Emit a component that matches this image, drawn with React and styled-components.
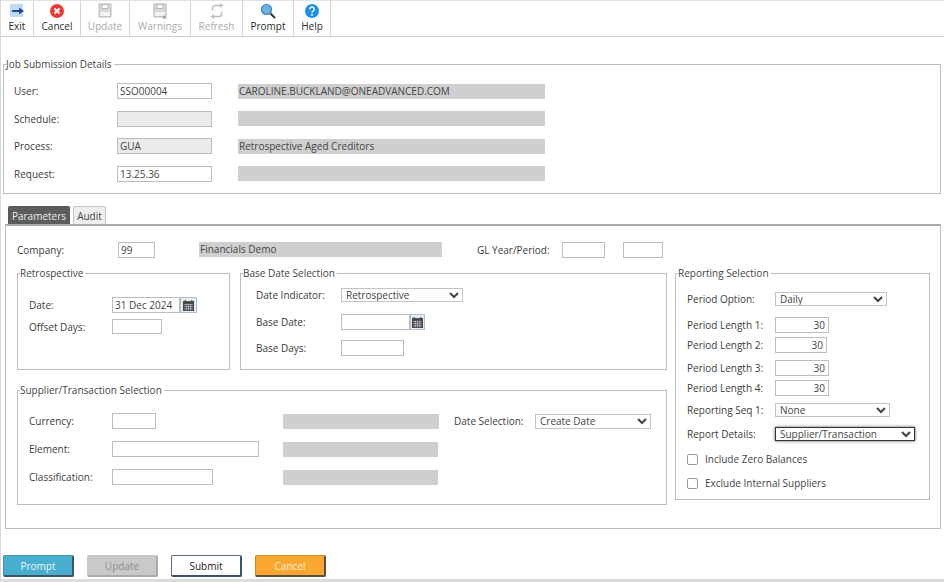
import React from 'react';
import styled, {createGlobalStyle} from 'styled-components';

const GlobalStyle = createGlobalStyle`
html, body {
    margin: 0;
    padding: 0;
    background: #fff;
    overflow: hidden;
}
* {
    box-sizing: border-box;
}
body, input, select, button {
    font-family: "Open Sans", "Noto Sans", sans-serif;
    font-size: 10px;
    color: #333;
}
`

const Page = styled.div`
width: 944px;
height: 582px;
display: flex;
flex-direction: column;
border-left: 1px solid #d8d8d8;
border-bottom: 3px solid #dcdcdc;
`
const Toolbar = styled.div`
display: flex;
height: 37px;
flex-shrink: 0;
border-top: 1px solid #e2e2e2;
border-bottom: 1px solid #ccc;
`
const ToolButton = styled.div`
width: ${({$width}) => $width}px;
display: flex;
flex-direction: column;
align-items: center;
justify-content: flex-start;
padding-top: 2px;
border-right: 1px solid #d4d4d4;
color: ${({$disabled}) => $disabled ? '#a9a9a9' : '#2b2b2b'};
line-height: 13px;
& > svg {
    width: 16px;
    height: 16px;
    margin-bottom: 1px;
}
`
const Content = styled.div`
display: flex;
flex-direction: column;
padding: 21px 3px 0 2px;
flex: 1;
`
const Group = styled.fieldset`
margin: 0;
padding: 0;
border: 1px solid #bdbdbd;
min-width: 0;
flex-shrink: 0;
width: ${({$width}) => $width ? `${$width}px` : 'auto'};
height: ${({$height}) => $height}px;
`
const Legend = styled.legend`
margin-left: 2px;
padding: 0 2px 0 0;
line-height: 13px;
color: #444;
`
const GroupBody = styled.div`
padding: ${({$top}) => $top}px 0 0 ${({$left}) => $left}px;
`
const JobGrid = styled.div`
display: grid;
grid-template-columns: 77px 95px 307px;
column-gap: 26px;
row-gap: 11.5px;
align-items: center;
`
const Label = styled.span`
color: #3c3c3c;
white-space: nowrap;
`
const TextInput = styled.input`
display: block;
height: ${({$height}) => $height || 16}px;
width: ${({$width}) => $width ? `${$width}px` : '100%'};
padding: 0 ${({$right}) => $right ? 3 : 2}px 0 2px;
border: 1px solid #bcbcbc;
border-radius: 0;
outline: none;
background: ${({$locked}) => $locked ? '#ebebeb' : '#fff'};
color: #444;
text-align: ${({$right}) => $right ? 'right' : 'left'};
`
const GreyField = styled.div`
height: 15px;
width: ${({$width}) => $width ? `${$width}px` : '100%'};
padding-left: 1px;
background: #cfcfcf;
color: #444;
line-height: 14px;
white-space: nowrap;
`
const Tabs = styled.div`
display: flex;
gap: 3px;
margin: 12px 0 0 5px;
height: 18px;
`
const Tab = styled.div`
width: ${({$width}) => $width}px;
display: flex;
align-items: center;
justify-content: center;
border: 1px solid ${({$active}) => $active ? '#555' : '#c4c4c4'};
border-bottom: none;
border-radius: 2px 2px 0 0;
background: ${({$active}) => $active ? '#5c5c5c' : '#eee'};
color: ${({$active}) => $active ? '#e6eef2' : '#444'};
`
const Panel = styled.div`
height: 305px;
margin-left: 2px;
padding: 15px 9px 0 11px;
border: 1px solid #bdbdbd;
border-top: 2px solid #aaa;
`
const CompanyRow = styled.div`
display: grid;
grid-template-columns: 101px 37px 44px 243px 35px 85px 43px 18px 40px;
align-items: center;
height: 17px;
`
const PanelBody = styled.div`
display: flex;
align-items: flex-start;
gap: 8px;
margin-top: 9px;
`
const LeftColumn = styled.div`
width: 650px;
flex-shrink: 0;
display: flex;
flex-direction: column;
gap: 14px;
`
const TopGroups = styled.div`
display: flex;
gap: 10px;
`
const FieldRow = styled.div`
display: grid;
grid-template-columns: ${({$label}) => $label}px 1fr;
align-items: center;
margin-top: ${({$gap}) => $gap || 0}px;
`
const DateBox = styled.div`
display: flex;
align-items: stretch;
`
const CalButton = styled.div`
width: ${({$width}) => $width}px;
height: 16px;
display: flex;
align-items: center;
justify-content: center;
background: #e9eef4;
border: 1px solid #a9bfd9;
& > svg {
    width: 11px;
    height: 11px;
}
`
const DropdownBox = styled.div`
height: ${({$height}) => $height || 14}px;
width: ${({$width}) => $width}px;
overflow: hidden;
display: flex;
align-items: center;
background: #fff;
border: 1px solid ${({$focused}) => $focused ? '#333' : '#c4c4c4'};
box-shadow: ${({$focused}) => $focused ? '0 0 3px rgba(0,0,0,.65)' : 'none'};
`
const DropdownSelect = styled.select`
display: block;
flex-shrink: 0;
width: 100%;
height: 18px;
padding: 0;
background: transparent;
border: none;
border-radius: 0;
outline: none;
color: #444;
`
const SupplierGrid = styled.div`
display: grid;
grid-template-columns: 83px 171px 171px 81px 116px;
row-gap: 12px;
align-items: center;
`
const CheckRow = styled.label`
display: flex;
align-items: center;
gap: 7px;
margin-top: ${({$gap}) => $gap}px;
height: 16px;
color: #444;
`
const CheckBox = styled.span`
width: 11px;
height: 11px;
border: 1px solid #9a9a9a;
border-radius: 2px;
background: #fff;
`
const Footer = styled.div`
display: flex;
gap: 13px;
margin-top: 26px;
`
const buttonColors = {
    prompt: {bg: '#48aed0', text: '#e8f6fb', edge: '#4a90ad', shade: '#3f5563'},
    update: {bg: '#c9c9c9', text: '#8f8f8f', edge: '#c9c9c9', shade: '#aaa'},
    submit: {bg: '#fff', text: '#222', edge: '#5c6b85', shade: '#3f4f6b'},
    cancel: {bg: '#fba62f', text: '#fff3df', edge: '#c98a2a', shade: '#5a5040'},
};
const ActionButton = styled.div`
width: 71px;
height: 22px;
display: flex;
align-items: center;
justify-content: center;
border: 1px solid ${({$variant}) => buttonColors[$variant].edge};
border-bottom: 2px solid ${({$variant}) => buttonColors[$variant].shade};
border-right: 2px solid ${({$variant}) => buttonColors[$variant].shade};
border-radius: 2px;
background: ${({$variant}) => buttonColors[$variant].bg};
color: ${({$variant}) => buttonColors[$variant].text};
font-weight: 500;
`

const ExitIcon = () => (
    <svg viewBox="0 0 16 16">
        <rect x="1" y="1" width="13" height="13" fill="#bcdcf5" />
        <path d="M3 8h8" stroke="#2f3f9e" strokeWidth="2" />
        <path d="M10 4.500 15 8l-5 3.500z" fill="#2f3f9e" />
    </svg>
);
const CancelIcon = () => (
    <svg viewBox="0 0 16 16">
        <circle cx="8" cy="8" r="7" fill="#ea3b35" />
        <path d="M5.500 5.500l5 5M10.500 5.500l-5 5" stroke="#fff" strokeWidth="2" />
    </svg>
);
const SaveIcon = ({extra}) => (
    <svg viewBox="0 0 16 16">
        <path d="M2 1h12v13H2z" fill="#d9d9d9" stroke="#b5b5b5" />
        <path d="M5 1.500h6v4H5z" fill="#fff" stroke="#b5b5b5" />
        <path d="M3 9h10v4H3z" fill="#f3f3f3" />
        {extra && <path d="M11 12l4 3.500h-4z" fill="#999" />}
    </svg>
);
const RefreshIcon = () => (
    <svg viewBox="0 0 16 16" fill="none" stroke="#bdbdbd" strokeWidth="1.500">
        <path d="M12 2.500H6A2.500 2.500 0 0 0 3.500 5v2.500" />
        <path d="M4 13.500h6A2.500 2.500 0 0 0 12.500 11V8.500" />
        <path d="M11 0l3.500 2.500L11 5z" fill="#bdbdbd" stroke="none" />
        <path d="M5 11l-3.500 2.500L5 16z" fill="#bdbdbd" stroke="none" />
    </svg>
);
const PromptIcon = () => (
    <svg viewBox="0 0 16 16">
        <circle cx="6.500" cy="6.500" r="5" fill="#6db3e6" stroke="#3c7fb0" strokeWidth="1.200" />
        <path d="M10.500 10.500l4.500 4.500" stroke="#3b3b3b" strokeWidth="2.200" />
    </svg>
);
const HelpIcon = () => (
    <svg viewBox="0 0 16 16">
        <circle cx="8" cy="8" r="7" fill="#1e8fe6" />
        <path d="M5.800 6.200a2.200 2.200 0 1 1 3.300 1.900c-.8.500-1.100.8-1.100 1.700" fill="none" stroke="#fff" strokeWidth="1.500" />
        <circle cx="8" cy="12" r="1" fill="#fff" />
    </svg>
);
const CalendarIcon = () => (
    <svg viewBox="0 0 10 10">
        <rect x="0" y="1" width="10" height="9" fill="#444" />
        <path d="M2 0v2M8 0v2" stroke="#444" />
        <path d="M1 4h8M1 6h8M1 8h8M3 3.500v6M5 3.500v6M7 3.500v6" stroke="#ccc" strokeWidth=".6" />
    </svg>
);

const Dropdown = ({value, width, height, focused}) => (
    <DropdownBox $width={width} $height={height} $focused={focused}>
        <DropdownSelect defaultValue={value}>
            <option>{value}</option>
        </DropdownSelect>
    </DropdownBox>
);

const tools = [
    {name: 'Exit', width: 33, icon: <ExitIcon />},
    {name: 'Cancel', width: 47, icon: <CancelIcon />},
    {name: 'Update', width: 49, icon: <SaveIcon />, disabled: true},
    {name: 'Warnings', width: 61, icon: <SaveIcon extra />, disabled: true},
    {name: 'Refresh', width: 52, icon: <RefreshIcon />, disabled: true},
    {name: 'Prompt', width: 51, icon: <PromptIcon />},
    {name: 'Help', width: 37, icon: <HelpIcon />},
];

const App = () => {
    return (
        <Page>
            <GlobalStyle />
            <Toolbar>
                {tools.map(tool => (
                    <ToolButton key={tool.name} $width={tool.width} $disabled={tool.disabled}>
                        {tool.icon}
                        {tool.name}
                    </ToolButton>
                ))}
            </Toolbar>
            <Content>
                <Group $height={136}>
                    <Legend>Job Submission Details</Legend>
                    <GroupBody $top={12} $left={10}>
                        <JobGrid>
                            <Label>User:</Label>
                            <TextInput readOnly defaultValue="SSO00004" />
                            <GreyField>CAROLINE.BUCKLAND@ONEADVANCED.COM</GreyField>
                            <Label>Schedule:</Label>
                            <TextInput readOnly $locked />
                            <GreyField />
                            <Label>Process:</Label>
                            <TextInput readOnly $locked defaultValue="GUA" />
                            <GreyField>Retrospective Aged Creditors</GreyField>
                            <Label>Request:</Label>
                            <TextInput readOnly defaultValue="13.25.36" />
                            <GreyField />
                        </JobGrid>
                    </GroupBody>
                </Group>
                <Tabs>
                    <Tab $active $width={62}>Parameters</Tab>
                    <Tab $width={33}>Audit</Tab>
                </Tabs>
                <Panel>
                    <CompanyRow>
                        <Label>Company:</Label>
                        <TextInput readOnly defaultValue="99" />
                        <span />
                        <GreyField>Financials Demo</GreyField>
                        <span />
                        <Label>GL Year/Period:</Label>
                        <TextInput readOnly />
                        <span />
                        <TextInput readOnly />
                    </CompanyRow>
                    <PanelBody>
                        <LeftColumn>
                            <TopGroups>
                                <Group $width={213} $height={103}>
                                    <Legend>Retrospective</Legend>
                                    <GroupBody $top={17} $left={11}>
                                        <FieldRow $label={83}>
                                            <Label>Date:</Label>
                                            <DateBox>
                                                <TextInput readOnly $width={68} defaultValue="31 Dec 2024" />
                                                <CalButton $width={17}><CalendarIcon /></CalButton>
                                            </DateBox>
                                        </FieldRow>
                                        <FieldRow $label={83} $gap={6}>
                                            <Label>Offset Days:</Label>
                                            <TextInput readOnly $width={50} $height={15} />
                                        </FieldRow>
                                    </GroupBody>
                                </Group>
                                <Group $width={427} $height={103}>
                                    <Legend>Base Date Selection</Legend>
                                    <GroupBody $top={8} $left={15}>
                                        <FieldRow $label={85}>
                                            <Label>Date Indicator:</Label>
                                            <Dropdown width={122} value="Retrospective" />
                                        </FieldRow>
                                        <FieldRow $label={85} $gap={12}>
                                            <Label>Base Date:</Label>
                                            <DateBox>
                                                <TextInput readOnly $width={69} />
                                                <CalButton $width={15}><CalendarIcon /></CalButton>
                                            </DateBox>
                                        </FieldRow>
                                        <FieldRow $label={85} $gap={10}>
                                            <Label>Base Days:</Label>
                                            <TextInput readOnly $width={63} />
                                        </FieldRow>
                                    </GroupBody>
                                </Group>
                            </TopGroups>
                            <Group $height={121}>
                                <Legend>Supplier/Transaction Selection</Legend>
                                <GroupBody $top={16} $left={11}>
                                    <SupplierGrid>
                                        <Label>Currency:</Label>
                                        <TextInput readOnly $width={44} />
                                        <GreyField $width={156} />
                                        <Label>Date Selection:</Label>
                                        <Dropdown width={116} height={15} value="Create Date" />
                                        <Label>Element:</Label>
                                        <TextInput readOnly $width={147} />
                                        <GreyField $width={155} />
                                        <span />
                                        <span />
                                        <Label>Classification:</Label>
                                        <TextInput readOnly $width={101} />
                                        <GreyField $width={155} />
                                    </SupplierGrid>
                                </GroupBody>
                            </Group>
                        </LeftColumn>
                        <Group $width={255} $height={233}>
                            <Legend>Reporting Selection</Legend>
                            <GroupBody $top={12} $left={11}>
                                <FieldRow $label={88}>
                                    <Label>Period Option:</Label>
                                    <Dropdown width={112} value="Daily" />
                                </FieldRow>
                                <FieldRow $label={88} $gap={11}>
                                    <Label>Period Length 1:</Label>
                                    <TextInput readOnly $right $width={54} defaultValue="30" />
                                </FieldRow>
                                <FieldRow $label={88} $gap={4}>
                                    <Label>Period Length 2:</Label>
                                    <TextInput readOnly $right $width={52} defaultValue="30" />
                                </FieldRow>
                                <FieldRow $label={88} $gap={7}>
                                    <Label>Period Length 3:</Label>
                                    <TextInput readOnly $right $width={54} defaultValue="30" />
                                </FieldRow>
                                <FieldRow $label={88} $gap={4}>
                                    <Label>Period Length 4:</Label>
                                    <TextInput readOnly $right $width={54} defaultValue="30" />
                                </FieldRow>
                                <FieldRow $label={88} $gap={7}>
                                    <Label>Reporting Seq 1:</Label>
                                    <Dropdown width={115} value="None" />
                                </FieldRow>
                                <FieldRow $label={88} $gap={10}>
                                    <Label>Report Details:</Label>
                                    <Dropdown focused width={140} value="Supplier/Transaction" />
                                </FieldRow>
                                <CheckRow $gap={10}><CheckBox />Include Zero Balances</CheckRow>
                                <CheckRow $gap={8}><CheckBox />Exclude Internal Suppliers</CheckRow>
                            </GroupBody>
                        </Group>
                    </PanelBody>
                </Panel>
                <Footer>
                    <ActionButton $variant="prompt">Prompt</ActionButton>
                    <ActionButton $variant="update">Update</ActionButton>
                    <ActionButton $variant="submit">Submit</ActionButton>
                    <ActionButton $variant="cancel">Cancel</ActionButton>
                </Footer>
            </Content>
        </Page>
    );
}

export default App;
